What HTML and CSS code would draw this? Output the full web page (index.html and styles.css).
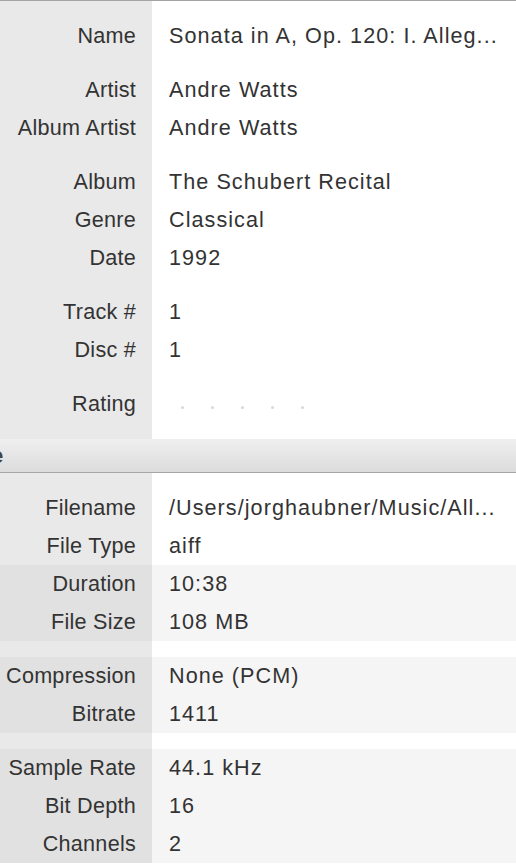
FILE: index.html
```html
<!DOCTYPE html>
<html lang="en">
<head>
<meta charset="utf-8">
<title>Info</title>
<link rel="stylesheet" href="styles.css">
</head>
<body>
<div class="pane">
  <section class="section section-tags">
    <div class="group">
      <div class="row"><div class="label">Name</div><div class="value">Sonata in A, Op. 120: I. Alleg...</div></div>
    </div>
    <div class="group">
      <div class="row"><div class="label">Artist</div><div class="value">Andre Watts</div></div>
      <div class="row"><div class="label">Album Artist</div><div class="value">Andre Watts</div></div>
    </div>
    <div class="group">
      <div class="row"><div class="label">Album</div><div class="value">The Schubert Recital</div></div>
      <div class="row"><div class="label">Genre</div><div class="value">Classical</div></div>
      <div class="row"><div class="label">Date</div><div class="value">1992</div></div>
    </div>
    <div class="group">
      <div class="row"><div class="label">Track #</div><div class="value">1</div></div>
      <div class="row"><div class="label">Disc #</div><div class="value">1</div></div>
    </div>
    <div class="group">
      <div class="row"><div class="label">Rating</div>
        <div class="value rating">
          <span class="dot"></span><span class="dot"></span><span class="dot"></span><span class="dot"></span><span class="dot"></span>
        </div>
      </div>
    </div>
  </section>

  <header class="section-header"><span class="header-title">File</span></header>

  <section class="section section-file">
    <div class="group">
      <div class="row"><div class="label">Filename</div><div class="value">/Users/jorghaubner/Music/All...</div></div>
      <div class="row"><div class="label">File Type</div><div class="value">aiff</div></div>
    </div>
    <div class="group striped">
      <div class="row"><div class="label">Duration</div><div class="value">10:38</div></div>
      <div class="row"><div class="label">File Size</div><div class="value">108 MB</div></div>
    </div>
    <div class="spacer"></div>
    <div class="group striped">
      <div class="row"><div class="label">Compression</div><div class="value">None (PCM)</div></div>
      <div class="row"><div class="label">Bitrate</div><div class="value">1411</div></div>
    </div>
    <div class="spacer"></div>
    <div class="group striped">
      <div class="row"><div class="label">Sample Rate</div><div class="value">44.1 kHz</div></div>
      <div class="row"><div class="label">Bit Depth</div><div class="value">16</div></div>
      <div class="row"><div class="label">Channels</div><div class="value">2</div></div>
    </div>
  </section>
</div>
</body>
</html>
```

FILE: styles.css
```css
html, body {
  margin: 0;
  padding: 0;
  background: #ffffff;
}

body {
  font-family: "Liberation Sans", Arial, Helvetica, sans-serif;
  font-size: 21.6px;
  color: #333333;
  width: 516px;
  height: 864px;
  overflow: hidden;
}

.pane {
  border-top: 1px solid #a3a3a3;
}

.section {
  display: flex;
  flex-direction: column;
  background: linear-gradient(to right, #e9e9e9 0, #e9e9e9 152px, #ffffff 152px);
}

.section-tags {
  padding-top: 16px;
  padding-bottom: 16px;
  gap: 16px;
}

.section-file {
  padding-top: 16px;
}

.group {
  display: flex;
  flex-direction: column;
}

.row {
  display: grid;
  grid-template-columns: 152px 1fr;
  height: 38px;
  align-items: center;
}

.label {
  text-align: right;
  padding-right: 16px;
  white-space: nowrap;
  letter-spacing: 0.25px;
  height: 100%;
  display: flex;
  align-items: center;
  justify-content: flex-end;
}

.value {
  padding-left: 17px;
  white-space: nowrap;
  letter-spacing: 1.05px;
  overflow: hidden;
  height: 100%;
  display: flex;
  align-items: center;
}

.striped .label {
  background: #e1e1e1;
}

.striped .value {
  background: #f5f5f5;
}

.spacer {
  height: 16px;
}

.rating {
  gap: 27px;
}

.dot {
  width: 3px;
  height: 3px;
  border-radius: 50%;
  background: #d8d8d8;
  margin-top: 6px;
}

.dot:first-child {
  margin-left: 12px;
}

.section-header {
  height: 33px;
  border-bottom: 1px solid #a6a6a6;
  background: linear-gradient(to bottom, #efefef, #dcdcdc);
  display: flex;
  align-items: center;
  overflow: hidden;
}

.header-title {
  font-weight: bold;
  color: #444444;
  margin-left: -34px;
  white-space: nowrap;
}
```
